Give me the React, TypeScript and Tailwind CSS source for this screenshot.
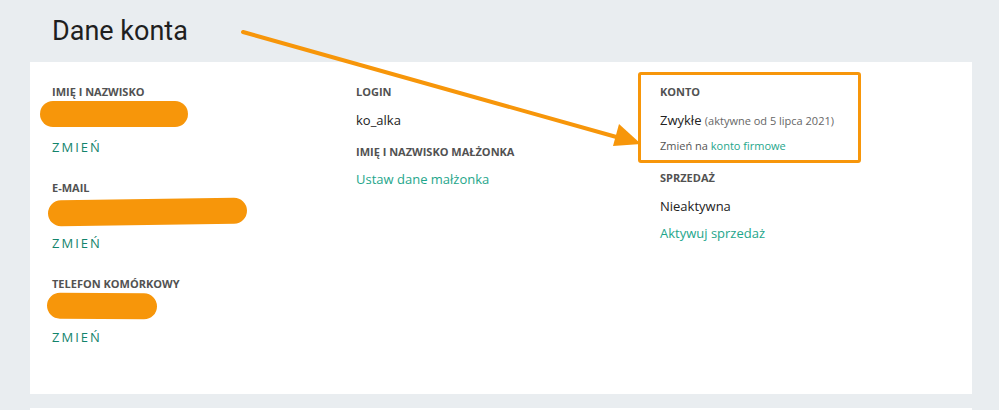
const label = 'block h-4 text-[11px] leading-4 font-bold uppercase text-[#525252]'
const change = 'block h-5 text-[13px] leading-5 tracking-[2px] text-[#13846c]'
const link = 'text-[#1ea68b]'

function Redacted({ className }: { className: string }) {
  return <div className={`h-[26px] rounded-full bg-[#f7960a] ${className}`} />
}

function Arrow() {
  return (
    <svg className="pointer-events-none absolute left-0 top-0" width="999" height="410">
      <line x1="243" y1="32" x2="620" y2="138" stroke="#f7960a" strokeWidth="4" strokeLinecap="round" />
      <polygon points="641,144 613,146 619,124" fill="#f7960a" />
    </svg>
  )
}

export default function App() {
  return (
    <div className="relative h-[410px] w-[999px] overflow-hidden bg-[#e9edf0] font-['Open_Sans',sans-serif] text-[#222]">
      <h1 className="h-[62px] pl-[52px] pt-[15px] font-['Roboto',sans-serif] text-[27px] leading-[32px] text-[#1f1f1f]">
        Dane konta
      </h1>

      <div className="ml-[30px] grid h-[332px] w-[942px] grid-cols-[304px_304px_1fr] bg-white pl-[22px] pt-[10px]">
        {/* Left column */}
        <div className="flex flex-col pt-3">
          <div className="h-[96px]">
            <span className={label}>Imię i nazwisko</span>
            <Redacted className="-ml-3 mt-px w-[148px]" />
            <span className={`${change} mt-[10px]`}>ZMIEŃ</span>
          </div>
          <div className="h-[96px]">
            <span className={label}>E-mail</span>
            <Redacted className="-ml-1 mt-[3px] w-[199px] -rotate-[0.8deg]" />
            <span className={`${change} mt-[8px]`}>ZMIEŃ</span>
          </div>
          <div className="h-[96px]">
            <span className={label}>Telefon komórkowy</span>
            <Redacted className="-ml-[5px] mt-[1px] w-[110px] rotate-[0.4deg]" />
            <span className={`${change} mt-[8px]`}>ZMIEŃ</span>
          </div>
        </div>

        {/* Middle column */}
        <div className="flex flex-col pt-3">
          <span className={label}>Login</span>
          <span className="mt-[10px] block h-5 text-[13px] leading-5">ko_alka</span>
          <span className={`${label} mt-[14px]`}>Imię i nazwisko małżonka</span>
          <span className={`mt-[9px] block h-5 text-[13px] leading-5 ${link}`}>Ustaw dane małżonka</span>
        </div>

        {/* Right column */}
        <div className="flex flex-col">
          <div className="-ml-[22px] w-[223px] rounded-[3px] border-[3px] border-[#f7960a] pb-[5px] pl-[19px] pt-[9px]">
            <span className={label}>Konto</span>
            <div className="mt-[10px] h-5 text-[13px] leading-5">
              Zwykłe <span className="text-[11px] text-[#666]">(aktywne od 5 lipca 2021)</span>
            </div>
            <div className="mt-[7px] h-[18px] text-[11px] leading-[18px] text-[#555]">
              Zmień na <span className={link}>konto firmowe</span>
            </div>
          </div>
          <span className={`${label} mt-[7px]`}>Sprzedaż</span>
          <span className="mt-[10px] block h-5 text-[13px] leading-5">Nieaktywna</span>
          <span className={`mt-[7px] block h-5 text-[13px] leading-5 ${link}`}>Aktywuj sprzedaż</span>
        </div>
      </div>

      <div className="ml-[30px] mt-[14px] h-10 w-[942px] bg-white" />

      <Arrow />
    </div>
  )
}
